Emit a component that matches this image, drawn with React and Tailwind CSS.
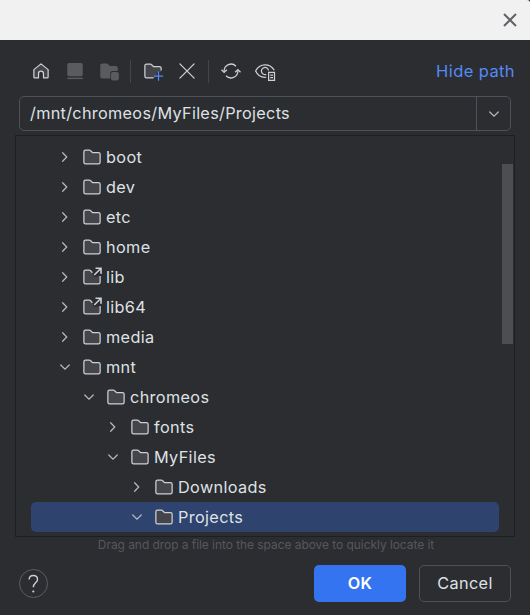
const FONT = "font-['Inter','Liberation_Sans',sans-serif]";

function Icon({ children, className = '' }) {
  return (
    <svg viewBox="0 0 16 16" fill="none" className={`h-5 w-5 shrink-0 ${className}`}>
      {children}
    </svg>
  );
}

const FOLDER = 'M1.5 3.8c0-.7.6-1.3 1.3-1.3h3.1c.3 0 .6.1.8.3L8.5 4.5h4.7c.7 0 1.3.6 1.3 1.3v6.4c0 .7-.6 1.3-1.3 1.3H2.8c-.7 0-1.3-.6-1.3-1.3z';

function Folder({ link }) {
  if (link) {
    return (
      <Icon>
        <path d="M1.5 3.8c0-.7.6-1.3 1.3-1.3h3.1c.3 0 .6.1.8.3L8.2 4.7l1.4 3.2 1.6-.2L14.5 7v5.2c0 .7-.6 1.3-1.3 1.3H2.8c-.7 0-1.3-.6-1.3-1.3z" fill="#43454a" />
        <path d="M8.3 4.6 6.7 2.8c-.2-.2-.5-.3-.8-.3H2.8c-.7 0-1.3.6-1.3 1.3v8.4c0 .7.6 1.3 1.3 1.3h10.4c.7 0 1.3-.6 1.3-1.3V7.2" stroke="#ced0d6" />
        <path d="M10.8 1h4.4v4.4M15 1.2 9.8 6.4" stroke="#ced0d6" strokeWidth="1.3" />
      </Icon>
    );
  }
  return (
    <Icon>
      <path d={FOLDER} fill="#43454a" stroke="#ced0d6" />
    </Icon>
  );
}

function Chevron({ open }) {
  return (
    <Icon>
      <path d={open ? 'M4.6 6.4 8 9.7l3.400-3.300' : 'M6.100 4.600 9.400 8l-3.300 3.400'} stroke="#b4b8bf" strokeLinecap="round" />
    </Icon>
  );
}

const rows = [
  { name: 'boot', pad: 'pl-[24px]' },
  { name: 'dev', pad: 'pl-[24px]' },
  { name: 'etc', pad: 'pl-[24px]' },
  { name: 'home', pad: 'pl-[24px]' },
  { name: 'lib', pad: 'pl-[24px]', link: true },
  { name: 'lib64', pad: 'pl-[24px]', link: true },
  { name: 'media', pad: 'pl-[24px]' },
  { name: 'mnt', pad: 'pl-[24px]', open: true },
  { name: 'chromeos', pad: 'pl-[48px]', open: true },
  { name: 'fonts', pad: 'pl-[72px]' },
  { name: 'MyFiles', pad: 'pl-[72px]', open: true },
  { name: 'Downloads', pad: 'pl-[96px]' },
  { name: 'Projects', pad: 'pl-[96px]', open: true, selected: true },
];

function Toolbar() {
  return (
    <div className="flex h-[56px] items-center pb-[1px] pt-[7px] pl-[31px] pr-[15px]">
      <div className="flex items-center gap-[14px]">
        <Icon>
          <path d="M2.3 6.9 8 2.3l5.7 4.6v5.9c0 .4-.3.7-.7.7H10v-3.4a2 2 0 0 0-4 0v3.4H3c-.4 0-.7-.3-.7-.7z" fill="#43454a" stroke="#ced0d6" strokeLinejoin="round" />
        </Icon>
        <Icon>
          <rect x="1.800" y="1.600" width="12.400" height="10.600" rx="1.400" fill="#5a5b5c" />
          <path d="M1.800 13.900h12.400" stroke="#5a5b5c" strokeWidth="1.200" />
        </Icon>
        <Icon>
          <path d="M1 3.600C1 2.700 1.700 2 2.600 2H6c.4 0 .7.1 1 .4L8.700 4h4.700c.9 0 1.600.7 1.600 1.600V8h-4.200C9.700 8 9 8.700 9 9.800V14H2.600C1.700 14 1 13.300 1 12.400z" fill="#5a5b5c" />
          <rect x="9.600" y="8.700" width="6.300" height="6.900" rx="1.600" fill="#5a5b5c" />
        </Icon>
      </div>
      <div className="ml-[11px] h-[23px] w-px bg-[#43454a]" />
      <div className="ml-[12px] flex items-center gap-[14px]">
        <Icon className="overflow-visible">
          <path d="M1.500 3.800c0-.7.6-1.300 1.300-1.300h3.100c.3 0 .6.1.8.3L8.500 4.500h4.700c.7 0 1.300.6 1.300 1.300V9H11v2.500H9.500v2H2.800c-.7 0-1.300-.6-1.300-1.300z" fill="#43454a" />
          <path d="M8.500 13.500H2.800c-.7 0-1.300-.6-1.300-1.300V3.800c0-.7.6-1.300 1.300-1.300h3.100c.3 0 .6.1.8.3L8.500 4.500h4.700c.7 0 1.300.6 1.300 1.300V7.500" stroke="#ced0d6" />
          <path d="M12.400 8.300v7.400M8.700 12h7.400" stroke="#548af7" strokeWidth="1" />
        </Icon>
        <Icon>
          <path d="m2.300 2.300 11.400 11.400M13.700 2.300 2.300 13.700" stroke="#ced0d6" strokeLinecap="round" />
        </Icon>
      </div>
      <div className="ml-[11px] h-[23px] w-px bg-[#43454a]" />
      <div className="ml-[12px] flex items-center gap-[14px]">
        <Icon className="overflow-visible">
          <path d="M2.500 8.500V8A5.500 5.500 0 0 1 12 4.200M13.500 7.500V8A5.500 5.500 0 0 1 4 11.800" stroke="#ced0d6" />
          <path d="M.4 7 2.500 9.100 4.700 7M11.300 9l2.200-2.100L15.600 9" stroke="#ced0d6" />
        </Icon>
        <Icon className="overflow-visible">
          <path d="M9 13C5 13.500 2 11.200.5 8 2 4.800 4.700 3 8 3s6 1.800 7.400 4.400" stroke="#ced0d6" />
          <path d="M9 10.700A2.850 2.850 0 1 1 10.800 7.600" stroke="#ced0d6" />
          <path d="M10.900 9h4.700v6.500h-4.700zM12.200 11.200h2.200M12.200 13.200h2.200" stroke="#ced0d6" />
        </Icon>
      </div>
      <a className="ml-auto text-[16.5px] tracking-[0.4px] text-[#548af7]">Hide path</a>
    </div>
  );
}

export default function App() {
  return (
    <div className={`flex h-[615px] w-[530px] flex-col bg-[#2b2d30] text-[16.25px] tracking-[0.35px] text-[#dfe1e5] ${FONT}`}>
      <div className="flex h-10 shrink-0 items-center justify-end rounded-tr-[3px] bg-[#f1f1f1] pr-[13px]">
        <svg viewBox="0 0 14 14" className="h-[14px] w-[14px]">
          <path d="m1 1 12 12M13 1 1 13" stroke="#5f6368" strokeWidth="2" />
        </svg>
      </div>
      <Toolbar />
      <div className="mx-[19px] flex h-[35px] shrink-0 rounded-[5px] border border-[#4e5157]">
        <div className="flex flex-1 items-center pl-[10px] tracking-[0.3px]">/mnt/chromeos/MyFiles/Projects</div>
        <div className="flex w-[34px] items-center justify-center border-l border-[#4e5157]">
          <Chevron open />
        </div>
      </div>
      <div className="mx-[15px] mt-[4px] flex h-[402px] shrink-0 border border-[#1e1f22] pl-[15px] pt-[6px]">
        <div className="w-[468px]">
          {rows.map((r) => (
            <div
              key={r.name}
              className={`flex h-[30px] items-center rounded-[5px] ${r.pad} ${r.selected ? 'bg-[#2e436e]' : ''}`}
            >
              <Chevron open={r.open} />
              <span className="ml-[7px] flex items-center">
                <Folder link={r.link} />
              </span>
              <span className="ml-[4px]">{r.name}</span>
            </div>
          ))}
        </div>
        <div className="ml-[3px] mt-[22px] h-[180px] w-[11px] bg-[#4d4e51]" />
      </div>
      <div className="flex h-[17px] items-center justify-center pl-[2px] pb-px text-[12px] tracking-[-0.06px] text-[#55585e]">
        Drag and drop a file into the space above to quickly locate it
      </div>
      <div className="flex items-center pl-[19px] pr-[19px] pt-[11px]">
        <div className="flex h-[29px] w-[29px] items-center justify-center rounded-full border border-[#5a5d63]">
          <svg viewBox="0 0 11 20" fill="none" className="h-5 w-[11px]">
            <path d="M1.200 5.500C1.200 3 2.900 1.500 5.300 1.500s4.200 1.500 4.200 3.900c0 3.400-4.200 3.600-4.200 7.800" stroke="#ced0d6" strokeWidth="1.400" />
            <circle cx="5.300" cy="17.500" r="1.100" fill="#ced0d6" />
          </svg>
        </div>
        <button className="ml-auto h-[37px] w-[92px] rounded-[5px] bg-[#3574f0] font-semibold text-white">OK</button>
        <button className="ml-[13px] h-[37px] w-[92px] rounded-[5px] border border-[#4e5157]">Cancel</button>
      </div>
    </div>
  );
}
